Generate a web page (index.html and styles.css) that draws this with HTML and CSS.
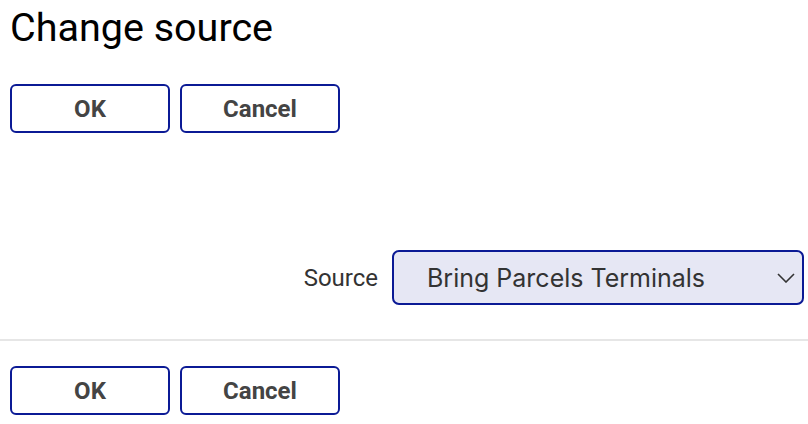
FILE: index.html
```html
<!DOCTYPE html>
<html>
<head>
<meta charset="utf-8">
<link rel="stylesheet" href="styles.css">
</head>
<body>
<div class="dialog">
  <h1 class="title">Change source</h1>
  <div class="actions top-actions">
    <button class="btn">OK</button>
    <button class="btn">Cancel</button>
  </div>
  <div class="field-row">
    <label class="field-label" for="src">Source</label>
    <div class="select-wrap">
      <select id="src" class="select">
        <option>Bring Parcels Terminals</option>
      </select>
      <svg class="chevron" width="18" height="10" viewBox="0 0 18 10"><path d="M1 1 L9 9 L17 1" fill="none" stroke="#333" stroke-width="1.6"/></svg>
    </div>
  </div>
  <hr class="divider">
  <div class="actions bottom-actions">
    <button class="btn">OK</button>
    <button class="btn">Cancel</button>
  </div>
</div>
</body>
</html>
```
FILE: styles.css
```css
html, body {
  margin: 0;
  padding: 0;
  background: #fff;
}
.dialog {
  font-family: Roboto, "Liberation Sans", sans-serif;
  padding: 0 4px 0 10px;
}
.title {
  margin: 0;
  padding-top: 4px;
  font-size: 39.5px;
  font-weight: 400;
  line-height: 48px;
  color: #000;
}
.actions {
  display: flex;
  gap: 10px;
}
.top-actions {
  margin-top: 32px;
}
.btn {
  width: 160px;
  height: 49px;
  box-sizing: border-box;
  border: 2px solid #0b1a95;
  border-radius: 6px;
  background: #fff;
  font-family: Roboto, "Liberation Sans", sans-serif;
  font-weight: 700;
  font-size: 24px;
  color: #444;
  padding: 0;
}
.field-row {
  display: flex;
  justify-content: flex-end;
  align-items: center;
  gap: 14px;
  margin-top: 117px;
}
.field-label {
  font-family: Roboto, "Liberation Sans", sans-serif;
  font-size: 24px;
  color: #333;
}
.select-wrap {
  position: relative;
  width: 412px;
  height: 55px;
}
.select {
  appearance: none;
  -webkit-appearance: none;
  width: 100%;
  height: 100%;
  box-sizing: border-box;
  border: 2px solid #0b1a95;
  border-radius: 7px;
  background: #e6e7f4;
  font-family: Inter, "Open Sans", sans-serif;
  font-size: 25px;
  color: #333;
  padding: 0 0 0 33px;
  margin: 0;
}
.chevron {
  position: absolute;
  right: 9px;
  top: 23px;
  pointer-events: none;
}
.divider {
  border: 0;
  height: 2px;
  background: #e6e6e6;
  margin: 34px 0 0 -10px;
  width: calc(100% + 14px);
}
.bottom-actions {
  margin-top: 25px;
}
```
